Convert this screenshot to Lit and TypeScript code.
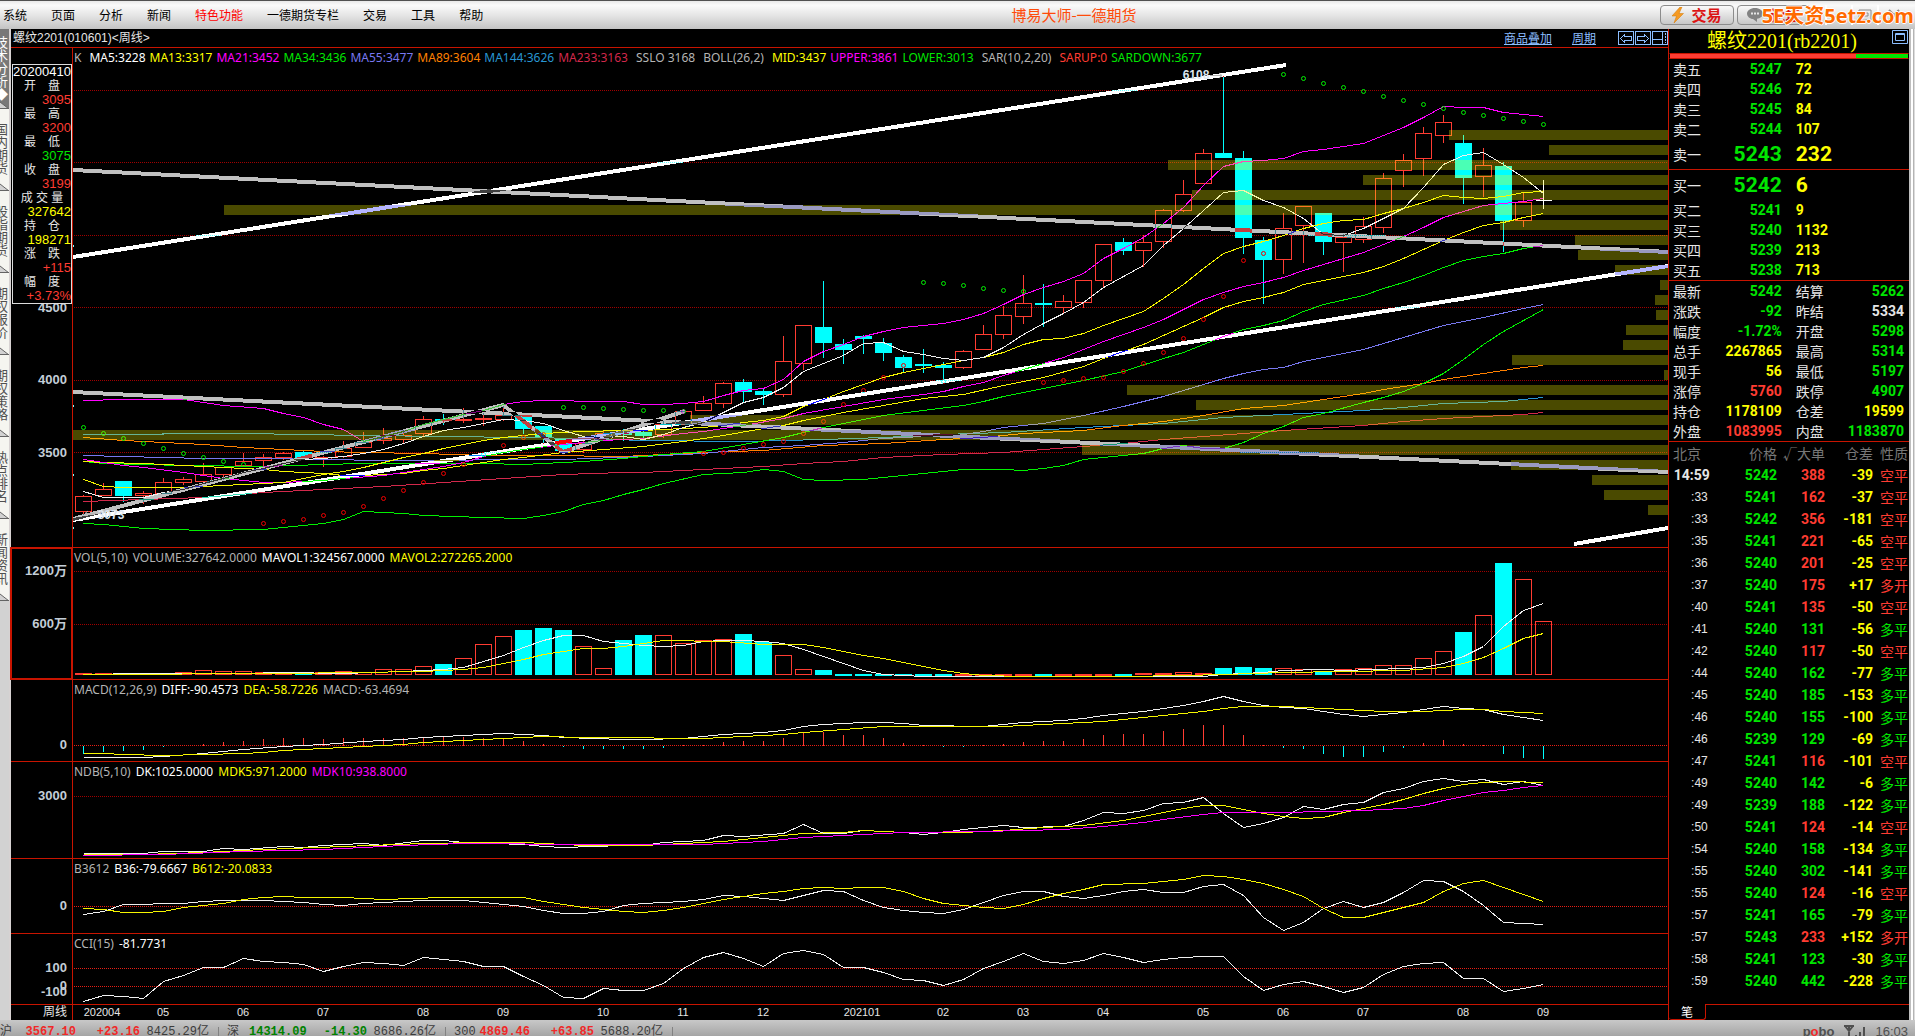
import { LitElement, html, svg, css, nothing } from "lit";
import { customElement, property } from "lit/decorators.js";
import { classMap } from "lit/directives/class-map.js";

/* ---------- chart data ---------- */

const LEFT = 73;
const WIDTH = 1595;
const STEP = 20;
const FIRST = 83;
const slotX = (i: number) => FIRST + STEP * i;

interface Series { tone: string; points: string; }
interface Mark { text: string; y: number; }
interface Legend { text: string; tone: string; }
interface Panel {
  id: string;
  top: number;
  height: number;
  legend: Legend[];
  marks: Mark[];
  grid: number[];
  bright?: boolean;
  framed?: boolean;
  series: Series[];
}

// kind, body top, body bottom, high, low
type Candle = [string, number, number, number, number];
const CANDLES: Candle[] = [
  ["r", 496, 511, 495, 515], ["r", 489, 495, 483, 495], ["c", 481, 496, 481, 502], ["r", 493, 495, 491, 504],
  ["r", 482, 493, 478, 493], ["r", 479, 482, 477, 485], ["r", 474, 481, 463, 482], ["r", 467, 474, 467, 480],
  ["r", 461, 465, 453, 467], ["r", 457, 460, 454, 466], ["r", 453, 457, 452, 460], ["c", 452, 458, 451, 458],
  ["r", 457, 459, 456, 467], ["r", 448, 456, 441, 458], ["r", 442, 447, 432, 448], ["r", 438, 440, 428, 444],
  ["r", 435, 439, 430, 443], ["r", 419, 433, 416, 436], ["c", 419, 421, 414, 425], ["r", 419, 420, 408, 423],
  ["r", 418, 419, 413, 426], ["r", 415, 419, 406, 421], ["c", 415, 429, 415, 434], ["c", 426, 438, 426, 444],
  ["c", 438, 451, 438, 451], ["r", 443, 449, 441, 453], ["r", 433, 439, 430, 439], ["c", 433, 435, 429, 441],
  ["c", 432, 436, 430, 439], ["r", 424, 434, 421, 438], ["r", 411, 424, 411, 424], ["r", 403, 410, 396, 410],
  ["r", 383, 403, 382, 408], ["c", 382, 392, 379, 402], ["c", 391, 395, 388, 405], ["r", 361, 394, 336, 397],
  ["r", 325, 363, 325, 370], ["c", 327, 343, 281, 358], ["c", 344, 350, 339, 364], ["c", 336, 339, 335, 354],
  ["c", 343, 353, 338, 361], ["c", 357, 368, 355, 372], ["c", 364, 366, 349, 373], ["c", 365, 368, 362, 380],
  ["r", 351, 367, 350, 369], ["r", 334, 349, 325, 349], ["r", 315, 334, 306, 339], ["r", 303, 316, 275, 324],
  ["c", 303, 305, 284, 327], ["r", 301, 307, 295, 314], ["r", 280, 302, 280, 308], ["r", 244, 280, 244, 287],
  ["c", 242, 251, 238, 255], ["r", 242, 250, 235, 267], ["r", 210, 241, 209, 248], ["r", 194, 210, 180, 212],
  ["r", 153, 183, 149, 183], ["c", 153, 158, 76, 158], ["c", 158, 238, 151, 254], ["c", 240, 260, 237, 304],
  ["r", 228, 259, 213, 274], ["r", 206, 225, 206, 263], ["c", 213, 242, 213, 255], ["r", 237, 242, 234, 272],
  ["r", 226, 239, 217, 243], ["r", 178, 227, 173, 233], ["r", 160, 170, 154, 187], ["r", 133, 158, 127, 176],
  ["r", 122, 135, 115, 143], ["c", 143, 178, 135, 204], ["r", 165, 176, 148, 197], ["c", 166, 221, 162, 252],
  ["r", 202, 220, 193, 227], ["x", 200, 200, 180, 209],
];

const VOLUME = [
  674, 674, 674, 674, 674, 673, 671, 672, 672, 673, 673, 673, 673, 672, 673, 670, 670, 667, 665, 659, 645, 637, 631, 629,
  631, 647, 669, 641, 636, 636, 644, 641, 640, 635, 643, 656, 670, 671, 675, 675, 675, 675, 675, 675, 675, 675, 675, 675,
  675, 675, 675, 675, 675, 674, 674, 673, 674, 669, 668, 669, 669, 670, 672, 670, 669, 666, 666, 659, 652, 633, 616, 564,
  580, 622,
];

const MACD_BARS = [
  753, 751, 750, 749, 746, 745, 743, 741, 740, 738, 737, 737, 738, 737, 737, 737, 737, 736, 736, 736, 737, 738, 740, 743,
  746, 748, 748, 748, 748, 747, 744, 744, 741, 740, 740, 737, 732, 731, 734, 734, 737, 742, 744, 746, 746, 744, 743, 741,
  740, 740, 738, 734, 733, 733, 730, 728, 724, 724, 734, 744, 747, 748, 753, 756, 756, 751, 747, 742, 739, 743, 744, 753,
  757, 758,
];

// top edge, left edge of each traded-volume band
const BANDS: [number, number][] = [
  [130, 1449], [145, 1549], [160, 1168], [175, 1363], [190, 1192], [205, 224], [220, 1500], [235, 1575], [250, 1578],
  [265, 1615], [280, 1660], [295, 1655], [310, 1656], [325, 1626], [340, 1623], [355, 1512], [370, 1664], [385, 1127],
  [400, 1196], [415, 690], [430, 73], [445, 1082], [460, 1511], [475, 1592], [490, 1604], [505, 1648],
];

const SAR_DOWN = "0,427 1,433 2,438 3,443 4,448 5,453 6,457 7,461 8,464 24,407 25,407 26,408 27,409 28,410 29,410 30,411 42,282 43,283 44,285 45,288 46,290 47,291 60,74 61,78 62,83 63,87 64,91 65,96 66,100 67,104 68,108 69,112 70,115 71,118 72,121 73,124";
const SAR_UP = "9,523 10,521 11,519 12,515 13,512 14,506 15,498 16,490 17,482 18,473 19,464 20,454 21,445 22,437 23,434 31,453 32,452 33,448 34,444 35,441 36,433 37,421 38,404 39,390 40,377 41,365 43,381 48,382 49,380 50,378 51,377 52,371 53,363 54,352 55,338 56,319 57,296 58,260 59,253";

const PANELS: Panel[] = [
  {
    id: "price", top: 48, height: 499,
    legend: [
      { text: "K", tone: "grey wide" }, { text: "MA5:3228", tone: "white" }, { text: "MA13:3317", tone: "yellow" },
      { text: "MA21:3452", tone: "magenta" }, { text: "MA34:3436", tone: "green" }, { text: "MA55:3477", tone: "indigo" },
      { text: "MA89:3604", tone: "orange" }, { text: "MA144:3626", tone: "blue" }, { text: "MA233:3163", tone: "crimson wide" },
      { text: "SSLO 3168", tone: "grey wide" }, { text: "BOLL(26,2)", tone: "grey wide" }, { text: "MID:3437", tone: "yellow" },
      { text: "UPPER:3861", tone: "magenta" }, { text: "LOWER:3013", tone: "green wide" }, { text: "SAR(10,2,20)", tone: "grey wide" },
      { text: "SARUP:0", tone: "red" }, { text: "SARDOWN:3677", tone: "green" },
    ],
    marks: [{ text: "4500", y: 308 }, { text: "4000", y: 380 }, { text: "3500", y: 453 }],
    grid: [90, 162, 235, 307, 380, 452],
    series: [
      { tone: "crimson", points: "0,501 3,499 6,497 9,492 12,489 15,486 18,482 21,478 24,474 27,472 28,472 31,469 34,466 36,463 38,461 40,457 43,454 46,452 48,449 50,446 52,443 54,439 56,436 58,433 60,430 64,425 66,421 68,418 70,416 72,414 73,412" },
      { tone: "blue", points: "0,434 8,433 14,435 18,436 22,437 25,438 28,440 33,441 37,439 40,437 43,434 46,432 50,427 54,423 57,417 60,414 64,410 66,407 68,403 71,401 73,397" },
      { tone: "orange", points: "0,437 2,440 4,442 6,444 8,447 10,449 12,451 14,452 17,453 20,455 23,455 27,456 28,455 31,452 34,450 37,445 40,443 43,439 45,437 47,433 50,430 52,425 54,421 56,415 58,408 60,405 62,399 64,393 65,389 67,383 68,379 70,373 71,370 72,367 73,365" },
      { tone: "indigo", points: "0,455 4,457 6,458 9,458 12,459 15,460 24,459 28,456 31,453 32,451 34,447 36,445 38,442 40,438 42,436 44,434 45,431 46,427 48,423 50,415 52,406 54,396 55,390 56,384 57,378 58,373 59,369 60,367 61,361 64,349 65,343 66,337 67,331 68,325 70,317 72,308 73,304" },
      { tone: "green", points: "0,461 1,463 5,465 9,466 12,464 14,463 20,463 22,464 24,462 25,461 27,458 28,456 29,454 31,451 33,444 35,437 36,432 37,427 38,423 40,415 42,410 44,405 45,401 46,396 48,388 50,380 52,371 54,358 55,352 56,344 57,336 58,329 59,325 60,320 61,311 62,304 64,295 65,288 66,282 67,275 68,267 69,260 70,256 71,253 72,248 73,245" },
      { tone: "green", points: "0,523 1,524 3,528 6,530 9,529 11,525 12,523 13,519 14,511 16,513 17,515 20,517 22,518 23,515 24,511 25,504 26,500 27,494 28,489 29,483 31,474 33,472 34,469 35,471 36,479 37,480 39,479 41,475 43,471 44,469 46,469 47,470 48,468 49,465 50,459 51,457 53,453 54,448 55,445 56,448 57,448 58,442 59,433 60,426 61,417 62,413 64,402 65,397 66,391 67,383 68,373 69,359 70,344 71,331 72,320 73,309" },
      { tone: "yellow", points: "0,461 1,462 3,463 5,465 7,467 9,469 10,471 11,472 12,473 13,475 14,475 15,474 16,473 17,470 18,468 19,465 20,462 21,459 22,457 24,452 26,449 28,446 30,441 32,435 34,428 35,425 36,420 38,412 40,405 42,398 44,394 46,385 48,377 50,366 51,358 52,351 53,344 54,335 55,326 56,317 57,307 58,301 59,297 60,292 61,284 63,276 64,272 65,266 66,258 67,249 68,240 69,232 70,225 71,222 72,217 73,213" },
      { tone: "magenta", points: "0,459 2,465 3,467 5,472 6,475 7,478 8,480 9,482 10,482 11,481 12,480 13,478 15,475 16,472 17,469 18,466 19,462 20,456 21,452 22,449 24,444 26,440 28,438 30,433 31,431 33,425 35,418 36,413 38,406 40,399 42,394 43,391 44,386 45,382 46,375 47,369 48,363 49,357 50,349 51,341 52,334 53,327 54,319 55,309 56,299 57,292 58,286 59,282 60,277 61,270 63,258 64,252 65,244 66,236 67,227 68,217 69,211 70,205 71,203 72,201 73,198" },
      { tone: "yellow", points: "0,479 1,486 2,487 5,487 7,485 9,483 10,482 11,478 12,474 13,471 14,467 15,462 16,457 17,453 18,448 19,444 20,440 21,437 22,435 23,433 24,432 25,431 27,430 28,430 30,428 31,427 32,425 33,422 34,420 35,416 36,406 37,399 38,391 39,384 40,377 41,372 42,368 43,364 44,360 45,357 46,352 47,344 48,339 49,338 50,333 51,325 52,318 53,311 54,298 55,284 56,268 57,253 58,246 59,241 60,235 61,228 62,223 63,220 64,219 65,213 66,208 67,202 68,195 69,197 70,198 71,196 72,192 73,191" },
      { tone: "magenta", points: "0,400 2,399 5,399 7,405 9,408 10,413 11,417 12,424 13,429 14,441 15,436 16,431 17,424 18,419 19,414 20,410 21,404 22,401 23,400 24,400 25,401 27,401 28,404 29,404 30,403 31,401 32,395 33,390 34,388 35,379 36,361 37,351 38,344 39,336 40,331 41,327 42,325 43,323 44,319 45,313 46,304 47,294 48,287 49,281 50,273 51,258 52,248 53,237 54,223 55,207 56,185 57,166 58,161 59,160 60,158 61,151 62,149 63,146 64,143 65,135 66,127 67,117 68,106 69,107 70,107 71,112 72,114 73,116" },
      { tone: "white", points: "0,491 1,497 2,497 3,497 4,492 5,489 6,483 7,478 8,472 9,468 10,463 11,459 12,458 13,456 14,453 15,449 16,443 17,436 18,430 19,427 20,423 21,419 22,420 23,423 24,430 25,436 26,437 27,436 28,439 29,434 30,427 31,422 32,412 33,402 34,397 35,387 36,371 37,363 38,355 39,343 40,342 41,351 42,354 43,358 44,360 45,357 46,347 47,334 48,323 49,313 50,302 51,287 52,276 53,265 54,245 55,228 56,210 57,192 58,190 59,200 60,207 61,218 62,234 63,235 64,228 65,218 66,208 67,187 68,164 69,155 70,152 71,164 72,177 73,193" },
    ],
  },
  {
    id: "volume", top: 548, height: 131, framed: true,
    legend: [
      { text: "VOL(5,10)", tone: "grey" }, { text: "VOLUME:327642.0000", tone: "grey" },
      { text: "MAVOL1:324567.0000", tone: "white" }, { text: "MAVOL2:272265.2000", tone: "yellow" },
    ],
    marks: [{ text: "1200万", y: 571 }, { text: "600万", y: 624 }],
    grid: [571, 624],
    series: [
      { tone: "white", points: "0,674 3,673 8,673 10,672 13,673 16,671 17,670 18,669 19,667 20,661 21,655 22,647 23,640 24,635 25,635 26,641 27,643 28,645 29,646 30,645 31,641 32,640 33,640 34,641 35,643 36,649 37,656 38,663 39,670 40,674 41,675 42,676 56,676 57,674 59,672 60,670 62,669 63,670 66,668 67,667 68,663 69,656 70,646 71,626 72,610 73,603" },
      { tone: "yellow", points: "0,674 10,673 17,671 19,669 20,667 21,663 22,659 23,654 24,651 25,648 26,648 27,646 28,643 29,640 32,641 34,644 36,644 37,647 39,655 40,658 42,666 43,670 44,673 45,675 47,676 52,676 55,675 57,674 60,672 63,671 66,670 68,667 69,663 70,657 71,648 72,638 73,633" },
    ],
  },
  {
    id: "macd", top: 680, height: 81, bright: true,
    legend: [
      { text: "MACD(12,26,9)", tone: "grey" }, { text: "DIFF:-90.4573", tone: "white" },
      { text: "DEA:-58.7226", tone: "yellow" }, { text: "MACD:-63.4694", tone: "grey" },
    ],
    marks: [{ text: "0", y: 745 }],
    grid: [745],
    series: [
      { tone: "white", points: "0,757 3,757 4,756 6,753 7,751 8,749 10,746 12,744 14,741 16,739 17,737 19,735 21,733 23,735 24,737 27,739 28,739 30,738 31,736 32,734 34,732 35,730 36,726 37,724 39,722 40,722 41,723 42,725 45,726 47,722 49,720 50,718 51,715 53,711 54,708 55,705 56,701 57,696 58,701 59,705 60,707 61,708 62,711 63,714 64,716 66,712 67,709 68,706 69,708 70,709 71,714 72,717 73,720" },
      { tone: "yellow", points: "0,753 1,753 2,754 4,755 6,754 8,753 9,752 10,750 12,748 14,746 16,744 17,742 19,740 21,738 23,736 25,737 27,737 30,738 31,738 33,736 35,734 36,732 38,729 40,726 46,726 48,724 51,721 53,717 55,713 56,711 57,708 58,706 60,706 62,708 65,711 67,711 69,709 70,709 71,711 72,712 73,713" },
    ],
  },
  {
    id: "ndb", top: 762, height: 96,
    legend: [
      { text: "NDB(5,10)", tone: "grey" }, { text: "DK:1025.0000", tone: "white" },
      { text: "MDK5:971.2000", tone: "yellow" }, { text: "MDK10:938.8000", tone: "magenta" },
    ],
    marks: [{ text: "3000", y: 796 }],
    grid: [796],
    series: [
      { tone: "white", points: "0,853 3,853 4,851 6,851 7,848 8,849 10,846 11,847 12,845 14,843 15,845 17,840 18,840 19,842 22,844 23,846 24,847 27,845 28,845 29,842 31,840 32,835 33,836 35,833 36,824 37,833 38,833 39,830 41,832 42,834 43,832 44,829 46,825 47,827 49,826 50,820 51,812 52,813 53,810 54,803 55,802 56,797 57,813 58,827 59,823 60,817 61,806 62,809 63,804 64,802 65,792 66,788 67,781 68,778 69,781 70,779 71,784 72,781 73,785" },
      { tone: "yellow", points: "0,854 3,854 6,852 9,849 13,846 17,843 20,842 22,842 25,845 28,845 30,843 32,841 34,837 36,833 38,832 39,830 41,832 44,832 46,830 48,827 50,825 52,820 53,816 54,812 55,808 56,805 57,805 58,809 59,813 60,816 61,818 62,817 63,812 64,808 65,804 66,799 67,793 68,788 69,784 70,782 71,781 73,782" },
      { tone: "magenta", points: "0,855 4,854 8,851 12,849 16,845 19,843 25,844 31,844 34,841 36,837 39,834 41,832 45,831 49,829 51,826 53,822 54,819 56,814 57,812 60,812 64,810 66,808 67,805 68,800 69,796 70,792 71,790 72,787 73,785" },
    ],
  },
  {
    id: "b3612", top: 859, height: 74, bright: true,
    legend: [
      { text: "B3612", tone: "grey" }, { text: "B36:-79.6667", tone: "white" }, { text: "B612:-20.0833", tone: "yellow" },
    ],
    marks: [{ text: "0", y: 906 }],
    grid: [906],
    series: [
      { tone: "white", points: "0,914 1,911 2,904 5,903 6,901 7,900 9,900 11,902 12,904 13,905 14,903 17,900 19,900 20,902 22,906 23,910 24,913 25,913 26,911 27,905 28,903 30,901 31,899 32,895 33,896 35,900 36,895 37,890 38,891 39,900 40,907 41,910 42,912 43,913 44,909 45,902 46,895 47,891 48,891 49,896 50,898 51,895 52,891 53,889 54,892 55,892 56,886 57,884 58,895 59,917 60,930 61,922 62,908 63,901 64,907 65,902 66,892 67,880 68,881 69,891 70,905 71,922 72,923 73,924" },
      { tone: "yellow", points: "0,908 1,909 2,912 3,912 4,911 5,907 6,905 7,903 8,899 9,897 10,896 11,897 13,897 15,899 18,897 22,897 23,901 24,904 25,907 27,911 28,912 29,910 30,907 31,903 32,899 33,896 34,893 35,891 36,888 37,887 38,888 39,887 40,887 41,891 42,898 43,903 44,905 45,907 46,908 47,904 48,898 49,893 50,889 51,884 53,883 54,881 55,879 56,875 57,876 58,879 59,883 60,889 61,896 62,908 63,917 64,917 65,912 67,902 68,891 69,883 70,880 71,887 72,894 73,901" },
    ],
  },
  {
    id: "cci", top: 934, height: 70, bright: true,
    legend: [{ text: "CCI(15)", tone: "grey" }, { text: "-81.7731", tone: "white" }],
    marks: [{ text: "100", y: 968 }, { text: "0", y: 986 }, { text: "-100", y: 992 }],
    grid: [968, 986],
    series: [
      { tone: "white", points: "0,1001 1,995 2,996 3,998 4,981 5,975 6,967 7,967 8,958 9,961 10,962 11,964 12,971 13,966 14,962 15,963 16,965 17,957 18,959 19,961 20,966 21,966 22,976 23,985 24,997 25,998 26,988 27,990 28,990 29,983 30,968 31,957 32,952 33,958 34,966 35,953 36,950 37,954 38,967 39,967 40,972 41,979 42,980 43,985 44,979 45,968 46,961 47,953 48,961 49,963 50,960 51,953 52,957 53,962 54,959 55,957 56,956 57,956 58,976 59,990 60,984 61,981 62,986 63,992 64,987 65,974 66,966 67,963 68,962 69,978 70,978 71,991 72,988 73,984" },
    ],
  },
];

const MONTHS: [string, number][] = [
  ["202004", 102], ["05", 163], ["06", 243], ["07", 323], ["08", 423], ["09", 503], ["10", 603], ["11", 683], ["12", 763],
  ["202101", 862], ["02", 943], ["03", 1023], ["04", 1103], ["05", 1203], ["06", 1283], ["07", 1363], ["08", 1463], ["09", 1543],
];

const READOUT: [string, string, string][] = [
  ["开　盘", "3095", "red"], ["最　高", "3200", "red"], ["最　低", "3075", "green"], ["收　盘", "3199", "red"],
  ["成 交 量", "327642", "yellow"], ["持　仓", "198271", "yellow"], ["涨　跌", "+115", "red"], ["幅　度", "+3.73%", "red"],
];

const toXY = (points: string) =>
  points.split(" ").map((p) => {
    const [i, y] = p.split(",").map(Number);
    return [slotX(i) + 0.5, y + 0.5];
  });

/* ---------- shared colours ---------- */

const tones = css`
  .white { color: #fff; stroke: #f0f0f0; }
  .grey { color: #b4b4b4; stroke: #b4b4b4; }
  .yellow { color: #ff0; stroke: #f5f500; }
  .magenta { color: #f0f; stroke: #f0f; }
  .green { color: #00e600; stroke: #00f000; }
  .indigo { color: #7878f0; stroke: #7878f0; }
  .orange { color: #ff8000; stroke: #ff8000; }
  .blue { color: #2896d2; stroke: #2896d2; }
  .crimson { color: #d2284b; stroke: #d2284b; }
  .red { color: #ff3c32; stroke: #ff3c32; }
`;

/* ---------- chart ---------- */

@customElement("indicator-panel")
export class IndicatorPanel extends LitElement {
  @property({ attribute: false }) panel!: Panel;

  static styles = [tones, css`
    :host { display: grid; grid-template-columns: 61px minmax(0, 1fr); min-height: 0; border-bottom: 1px solid #c81400; box-sizing: border-box; }
    .axis { position: relative; font: bold 13px/14px "Liberation Sans", "Noto Sans CJK SC", sans-serif; color: #c3cdd7; }
    .axis.framed { outline: 2px solid #c81400; outline-offset: -1px; }
    .mark { position: absolute; right: 5px; transform: translateY(-50%); }
    .plot { position: relative; border-left: 1px solid #c81400; min-width: 0; }
    svg { position: absolute; inset: 0; width: 100%; height: 100%; isolation: isolate; }
    .legend { position: relative; display: flex; gap: 5px; padding-left: 1px; font: 12px/19px "Noto Sans", "Noto Sans CJK SC", sans-serif; white-space: nowrap; overflow: hidden; }
    .legend.dense { gap: 4px; line-height: 20px; }
    .wide { margin-right: 4px; }
    .grid { stroke: #a00000; stroke-dasharray: 1 1; shape-rendering: crispEdges; }
    .grid.bright { stroke: #e61e14; }
    .curve { fill: none; shape-rendering: crispEdges; }
    .r { fill: none; stroke: #ff3c32; shape-rendering: crispEdges; }
    .c { fill: #0ff; stroke: #0ff; shape-rendering: crispEdges; }
    .x { stroke: #fff; fill: none; shape-rendering: crispEdges; }
    .arrow { fill: none; }
    .ring { fill: none; }
    .ring.up { stroke: #f00000; }
    .ring.down { stroke: #00f000; }
    .band { fill: #ff0; opacity: 0.29; shape-rendering: crispEdges; }
    .trend { fill: none; stroke: #fff; stroke-width: 4; mix-blend-mode: difference; shape-rendering: crispEdges; }
    .trend.soft { stroke: #c0c0c0; }
    .tick { fill: #7ff; }
    .pin { position: absolute; transform: translate(-50%, -50%); font: bold 12px/14px "Liberation Sans", sans-serif; color: #dce6f0; }
  `];

  private candles() {
    return CANDLES.map(([kind, top, bottom, high, low], i) => {
      const x = slotX(i) + 0.5;
      if (kind === "x") {
        return svg`<path class="x" d="M${x} ${high}V${low}M${x - 8} ${top + 0.5}H${x + 8}"/>`;
      }
      if (kind === "c") {
        return svg`<g class="c"><path d="M${x} ${high}V${low}"/><rect x=${x - 8} y=${top + 0.5} width="16" height=${Math.max(1, bottom - top - 1)}/></g>`;
      }
      return svg`<g class="r"><path d="M${x} ${high}V${top}M${x} ${bottom}V${low}"/><rect x=${x - 8} y=${top + 0.5} width="16" height=${Math.max(1, bottom - top)}/></g>`;
    });
  }

  private rings(points: string, kind: string) {
    return toXY(points).map(([x, y]) => svg`<ellipse class="ring ${kind}" cx=${x} cy=${y} rx="2" ry="2"/>`);
  }

  private trends() {
    return svg`
      <path class="trend soft" d="M73 170L1668 252"/>
      <path class="trend soft" d="M73 392L1668 472"/>
      <path class="trend soft" d="M73 519L503 405L563 452L685 411"/>
      <path class="trend" d="M73 257L1286 65"/>
      <path class="trend" d="M73 520L1668 266"/>
      <path class="trend" d="M1574 544L1668 528"/>
      ${[245, 405, 474, 527].map((y) => svg`<rect class="tick" x="73" y=${y} width="1" height="2"/>`)}
      <path class="grey arrow" d="M1210 75.5H1222M1219 73L1222 75.5L1219 78"/>
      <path class="grey arrow" d="M85 513.5H96M88 511L85 513.5L88 516"/>`;
  }

  private bars() {
    return VOLUME.map((top, i) => {
      const kind = CANDLES[i][0] === "c" ? "c" : "r";
      return svg`<rect class=${kind} x=${slotX(i) - 7.5} y=${top - 0.5} width="16" height=${Math.max(1, 675 - top)}/>`;
    });
  }

  private histogram() {
    return MACD_BARS.map((y, i) => svg`<path class=${y > 745 ? "c" : "r"} d="M${slotX(i) + 0.5} 745.5V${y + 0.5}"/>`);
  }

  render() {
    const { id, top, height, legend, marks, grid, bright, framed, series } = this.panel;
    const percent = (y: number) => ((y - top) / height) * 100;
    return html`
      <div class=${classMap({ axis: true, framed: !!framed })}>
        ${marks.map((m) => html`<span class="mark" style="top:${percent(m.y)}%">${m.text}</span>`)}
      </div>
      <div class="plot">
        <svg viewBox="${LEFT} ${top} ${WIDTH} ${height}" preserveAspectRatio="none" aria-hidden="true">
          ${grid.map((y) => svg`<path class="grid ${bright ? "bright" : ""}" d="M74 ${y + 0.5}H1668"/>`)}
          ${id === "price" ? this.candles() : nothing}
          ${id === "volume" ? this.bars() : nothing}
          ${id === "macd" ? this.histogram() : nothing}
          ${series.map((s) => svg`<polyline class="curve ${s.tone}" points=${toXY(s.points).map((p) => p.join(",")).join(" ")}/>`)}
          ${id === "price"
            ? svg`${this.rings(SAR_UP, "up")}${this.rings(SAR_DOWN, "down")}
                ${BANDS.map(([y, x]) => svg`<rect class="band" x=${x} y=${y} width=${LEFT + WIDTH - x} height="10"/>`)}
                ${this.trends()}`
            : nothing}
        </svg>
        <div class=${classMap({ legend: true, dense: id === "price" })}>${legend.map((l) => html`<span class=${l.tone}>${l.text}</span>`)}</div>
        ${id === "price"
          ? [["6108", 1196, 75], ["3073", 111, 515]].map(([text, x, y]) => html`
              <span class="pin" style="left:${((+x - LEFT) / WIDTH) * 100}%;top:${percent(+y)}%">${text}</span>`)
          : nothing}
      </div>`;
  }
}

@customElement("chart-area")
export class ChartArea extends LitElement {
  static styles = [tones, css`
    :host { position: relative; display: grid; min-height: 0; min-width: 0; background: #000; border-right: 1px solid #c81400;
      grid-template-rows: 19px minmax(0, 500fr) minmax(0, 132fr) minmax(0, 82fr) minmax(0, 97fr) minmax(0, 75fr) minmax(0, 71fr) 15px; }
    .head { display: flex; align-items: center; box-sizing: border-box; border-bottom: 1px solid #c81400; padding-left: 2px; }
    .name { flex: 1; font: 12px/16px "Liberation Sans", "Noto Sans CJK SC", sans-serif; color: #e6e6e6; }
    .links { display: flex; gap: 20px; margin-right: 22px; font: 12px/16px "Noto Sans CJK SC", sans-serif; }
    .links a { color: #8cbeff; text-decoration: underline; }
    .tools { display: flex; gap: 1px; }
    .tools button { width: 16px; height: 15px; padding: 0; border: 0; background: none; display: block; }
    .tools svg { display: block; width: 16px; height: 15px; fill: none; stroke: #8cbeff; shape-rendering: crispEdges; }
    .dates { display: grid; grid-template-columns: 61px minmax(0, 1fr); font: 12px/15px "Liberation Sans", "Noto Sans CJK SC", sans-serif; color: #e6e6e6; }
    .period { text-align: right; padding-right: 5px; }
    .scale { position: relative; border-left: 1px solid #c81400; font: 11px/15px "Liberation Sans", sans-serif; }
    .month { position: absolute; transform: translateX(-50%); }
    .readout { position: absolute; left: 1px; top: 35px; width: 60px; box-sizing: border-box; margin: 0; border: 1px solid #dcdcdc; background: #000;
      font: 13px/14px "Liberation Sans", "Noto Sans CJK SC", sans-serif; color: #fff; }
    .day { text-align: center; line-height: 14px; }
    .readout dl { margin: 0; }
    .readout dt { text-align: center; font-size: 12px; color: #e6e6e6; }
    .readout dd { margin: 0; text-align: right; }
  `];

  render() {
    return html`
      <div class="head">
        <span class="name">螺纹2201(010601)&lt;周线&gt;</span>
        <nav class="links"><a href="#overlay">商品叠加</a><a href="#period">周期</a></nav>
        <div class="tools">
          <button aria-label="左移"><svg viewBox="0 0 16 15"><path d="M.5.5h15v13H.5zM2.5 7.5l4-4v2h7v4h-7v2z"/></svg></button>
          <button aria-label="右移"><svg viewBox="0 0 16 15"><path d="M.5.5h15v13H.5zM13.5 7.5l-4-4v2h-7v4h7v2z"/></svg></button>
          <button aria-label="布局"><svg viewBox="0 0 16 15"><path d="M.5.5h15v13H.5zM.5 8.5h10M10.5.5v13"/><path d="M13.5 2v10" stroke-dasharray="2 1"/></svg></button>
        </div>
      </div>
      ${PANELS.map((p) => html`<indicator-panel .panel=${p}></indicator-panel>`)}
      <div class="dates">
        <span class="period">周线</span>
        <div class="scale">${MONTHS.map(([m, x]) => html`<span class="month" style="left:${((x - LEFT) / WIDTH) * 100}%">${m}</span>`)}</div>
      </div>
      <div class="readout">
        <div class="day">20200410</div>
        <dl>${READOUT.map(([k, v, tone]) => html`<dt>${k}</dt><dd class=${tone}>${v}</dd>`)}</dl>
      </div>`;
  }
}

/* ---------- quote panel ---------- */

const ASKS = [["卖五", "5247", "72"], ["卖四", "5246", "72"], ["卖三", "5245", "84"], ["卖二", "5244", "107"], ["卖一", "5243", "232"]];
const BIDS = [["买一", "5242", "6"], ["买二", "5241", "9"], ["买三", "5240", "1132"], ["买四", "5239", "213"], ["买五", "5238", "713"]];
const STATS = [
  ["最新", "5242", "green", "结算", "5262", "green"], ["涨跌", "-92", "green", "昨结", "5334", "pale"],
  ["幅度", "-1.72%", "green", "开盘", "5298", "green"], ["总手", "2267865", "yellow", "最高", "5314", "green"],
  ["现手", "56", "yellow", "最低", "5197", "green"], ["涨停", "5760", "red", "跌停", "4907", "green"],
  ["持仓", "1178109", "yellow", "仓差", "19599", "yellow"], ["外盘", "1083995", "red", "内盘", "1183870", "green"],
];
const TICKS = [
  "14:59 5242 388 -39 空平", ":33 5241 162 -37 空平", ":33 5242 356 -181 空平", ":35 5241 221 -65 空平",
  ":36 5240 201 -25 空平", ":37 5240 175 +17 多开", ":40 5241 135 -50 空平", ":41 5240 131 -56 多平",
  ":42 5240 117 -50 空平", ":44 5240 162 -77 多平", ":45 5240 185 -153 多平", ":46 5240 155 -100 多平",
  ":46 5239 129 -69 多平", ":47 5241 116 -101 空平", ":49 5240 142 -6 多平", ":49 5239 188 -122 多平",
  ":50 5241 124 -14 空平", ":54 5240 158 -134 多平", ":55 5240 302 -141 多平", ":55 5240 124 -16 空平",
  ":57 5241 165 -79 多平", ":57 5243 233 +152 多开", ":58 5241 123 -30 多平", ":59 5240 442 -228 多平",
].map((t) => t.split(" "));

@customElement("quote-panel")
export class QuotePanel extends LitElement {
  static styles = [tones, css`
    :host { display: flex; flex-direction: column; min-height: 0; overflow: hidden; background: #000; color: #e6e6e6; font: 14px/20px "Noto Sans CJK SC", sans-serif; }
    .title { position: relative; height: 24px; }
    h1 { margin: 0; font: 20px/24px "Liberation Serif", "Noto Sans CJK SC", serif; color: #ff0; text-align: center; padding-right: 14px; }
    .title button { position: absolute; right: 1px; top: 1px; width: 16px; height: 14px; padding: 0; border: 0; background: none; }
    .title svg { display: block; fill: none; stroke: #8cbeff; }
    .ratio { height: 6px; box-sizing: border-box; display: flex; border: 1px solid #c81400; border-left-color: #000; border-right-color: #000; }
    .ratio i { background: #ff3c32; flex: 186; }
    .ratio b { background: #00e600; flex: 52; }
    table { width: 100%; table-layout: fixed; border-collapse: collapse; }
    .w15 { width: 15%; }
    .w17 { width: 17%; }
    .w20 { width: 20%; }
    .w28 { width: 28%; }
    .w32 { width: 32%; }
    td, th { padding: 0; font-weight: normal; text-align: left; height: 20px; line-height: 20px; white-space: nowrap; }
    th:first-child, td:first-child { padding-left: 4px; }
    .book, .stats { border-bottom: 1px solid #c81400; }
    .num { font: bold 14px/20px "Roboto", sans-serif; text-align: right; }
    .book .qty { text-align: left; padding-left: 14px; }
    .best td, .best th { height: 30px; line-height: 30px; }
    .best .num { font-size: 21px; line-height: 30px; }
    .label2 { padding-left: 14px; }
    .stats .num:last-child { padding-right: 5px; }
    .pale { color: #e6e6e6; }
    .ticks td, .ticks th { height: 22px; line-height: 22px; text-align: right; }
    .ticks th { color: #787878; }
    .ticks thead th:first-child { text-align: left; }
    .ticks .clock { font: 12px/22px "Liberation Sans", sans-serif; padding-right: 2px; color: #e6e6e6; }
    .ticks .clock.full { font: bold 14px/22px "Roboto", sans-serif; padding-right: 0; }
    .ticks td:last-child, .ticks th:last-child { padding-right: 1px; }
    .foot { margin-top: auto; height: 16px; display: flex; }
    .foot button { width: 37px; height: 16px; box-sizing: border-box; padding: 0; border: 1px solid #c81400; border-top: 0; border-left: 0; border-radius: 0 0 3px 3px; background: #000; color: #fff; font: 12px/14px "Noto Sans CJK SC", sans-serif; }
    .foot i { flex: 1; border-top: 1px solid #c81400; }
  `];

  private book(rows: string[][], best: number) {
    return html`<table class="book">
      <colgroup><col class="w15"><col class="w32"><col></colgroup>
      <tbody>${rows.map(([k, p, q], i) => html`<tr class=${i === best ? "best" : ""}>
        <th scope="row">${k}</th><td class="num green">${p}</td><td class="num qty yellow">${q}</td></tr>`)}</tbody>
    </table>`;
  }

  render() {
    return html`
      <div class="title"><h1>螺纹2201(rb2201)</h1>
        <button aria-label="还原"><svg width="16" height="14" viewBox="0 0 16 14"><path d="M.5.5h15v13H.5zM3.5 3.5h9v7h-9zM3.5 4.5h9"/></svg></button></div>
      <div class="ratio"><i></i><b></b></div>
      ${this.book(ASKS, 4)}${this.book(BIDS, 0)}
      <table class="stats">
        <colgroup><col class="w15"><col class="w32"><col class="w20"><col></colgroup>
        <tbody>${STATS.map(([k, v, t, k2, v2, t2]) => html`<tr><th scope="row">${k}</th><td class="num ${t}">${v}</td><th scope="row" class="label2">${k2}</th><td class="num ${t2}">${v2}</td></tr>`)}</tbody>
      </table>
      <table class="ticks">
        <colgroup><col class="w17"><col class="w28"><col class="w20"><col class="w20"><col></colgroup>
        <thead><tr><th>北京</th><th>价格</th><th>√大单</th><th>仓差</th><th>性质</th></tr></thead>
        <tbody>${TICKS.map(([time, price, vol, diff, kind]) => {
          const tone = kind === "多平" ? "green" : "red";
          const volTone = kind === "多平" ? "green" : "red";
          return html`<tr><td class="clock ${time.length > 3 ? "full" : ""}">${time}</td><td class="num green">${price}</td><td class="num ${volTone}">${vol}</td><td class="num yellow">${diff}</td><td class=${tone}>${kind}</td></tr>`;
        })}</tbody>
      </table>
      <div class="foot"><button>笔</button><i></i></div>`;
  }
}

/* ---------- application frame ---------- */

const MENU = ["系统", "页面", "分析", "新闻", "特色功能", "一德期货专栏", "交易", "工具", "帮助"];
const SIDE = ["技术分析", "国内期货", "股指期货", "期权报价", "期权策略", "热点排名", "新闻资讯"];
const INDEXES = [
  ["沪", "3567.10", "+23.16", "8425.29亿", "up"], ["深", "14314.09", "-14.30", "8686.26亿", "down"],
  ["300", "4869.46", "+63.85", "5688.20亿", "up"],
];

@customElement("app-root")
export class AppRoot extends LitElement {
  static styles = css`
    :host { display: grid; grid-template-rows: 29px minmax(0, 1fr) 16px; height: 100vh; overflow: hidden; background: #c8c8c8; font-family: "Noto Sans CJK SC", sans-serif; }
    .bar { position: relative; display: grid; grid-template-columns: 1fr auto 1fr; align-items: center; box-sizing: border-box; border-top: 1px solid #505050; background: linear-gradient(#e8e8e8, #fafafa 15%, #e6e6e6 50%, #c3c3c3); }
    .menu { display: flex; gap: 24px; padding-left: 3px; }
    .menu a { font-size: 12px; line-height: 28px; color: #000; text-decoration: none; white-space: nowrap; }
    .menu a.hot { color: #f00; }
    .caption { font-size: 15px; line-height: 26px; color: #ff4b0a; padding-left: 233px; }
    .right { display: flex; justify-content: flex-end; align-items: center; padding-right: 6px; }
    .pill { display: flex; align-items: center; justify-content: center; gap: 7px; width: 74px; height: 20px; box-sizing: border-box; padding: 0; margin-right: 3px; border: 1px solid #8c8c8c; border-radius: 4px; background: linear-gradient(#fafafa, #c8c8c8); color: #dc1414; font: bold 15px/18px "Noto Sans CJK SC", sans-serif; }
    .win { width: 26px; height: 20px; padding: 0; border: 0; border-left: 2px solid #fff; background: none; display: grid; place-items: center; }
    .win.first { margin-left: 11px; }
    .win.last { width: 32px; }
    .win svg { stroke: #8c8c8c; fill: none; stroke-width: 2; }
    .watermark { position: absolute; right: 1px; top: 0; font: bold 20px/30px "Open Sans", "Noto Sans CJK SC", sans-serif; color: #ff6a00; text-shadow: 1px 0 #fff, -1px 0 #fff, 0 1px #fff, 0 -1px #fff; white-space: nowrap; }
    .body { display: grid; grid-template-columns: 11px minmax(0, 1fr) 240px 6px; min-height: 0; }
    .side { display: flex; flex-direction: column; overflow: hidden; background: #d2d2d2; border-right: 2px solid #d7d2d2; box-sizing: border-box; }
    .side a { display: block; position: relative; flex: none; width: 9px; height: 82px; box-sizing: border-box; padding-top: 13px; background: #f5f5f0; color: #505050; text-decoration: none; font-size: 13px; line-height: 13px; overflow: hidden; }
    .side a.on { height: 80px; padding-top: 6px; background: #787878; color: #fff; }
    .side span { display: block; width: 13px; margin-left: -5px; word-break: break-all; }
    .side svg { position: absolute; left: 0; bottom: 0; }
    .edge { background: linear-gradient(90deg, #bebebe 2px, #fff 2px, #fff 4px, #8c8c8c 4px, #dcdcdc 5px); }
    .status { display: flex; overflow: hidden; align-items: flex-start; background: linear-gradient(#c8c8c8, #a5a5a5); color: #3c3c3c; font: 12px/24px "Liberation Mono", "Noto Sans CJK SC", monospace; white-space: nowrap; }
    .index { display: grid; grid-template-columns: 22px 54px 64px 69px; margin-right: 8px; padding-right: 10px; position: relative; }
    .index::after { content: ""; position: absolute; right: 0; top: 7px; bottom: 0; border-right: 1px solid #828282; }
    .index span { text-align: right; }
    .index span:first-child { text-align: left; }
    .chg { font-weight: bold; }
    .up .chg { color: #f02828; }
    .down .chg { color: #008200; }
    .tray { margin-left: auto; display: flex; gap: 10px; padding-right: 7px; }
    .brand { font: bold 13px/24px "Liberation Sans", sans-serif; color: #505050; }
    .brand em { font-style: normal; color: #f02828; }
    .tray svg { margin-top: 5px; }
    .clock { font: 13px/24px "Liberation Sans", sans-serif; color: #505050; }
  `;

  render() {
    return html`
      <header class="bar">
        <nav class="menu">${MENU.map((m) => html`<a href="#menu" class=${classMap({ hot: m === "特色功能" })}>${m}</a>`)}</nav>
        <span class="caption">博易大师-一德期货</span>
        <div class="right">
          <button class="pill"><svg width="12" height="16" viewBox="0 0 12 16"><path d="M8 0L0 9h4.5L2 16L11.5 6.5H7L10 0z" fill="#f59a23" stroke="#d27800" stroke-width=".5"/></svg>交易</button>
          <button class="pill"><svg width="16" height="14" viewBox="0 0 16 14"><path d="M8 0C3.5 0 0 2.5 0 5.5S3 11 6 11l4 3v-3.200c3.5-.5 6-2.600 6-5.300C16 2.500 12.500 0 8 0z" fill="#828282"/><path d="M4 5.500h2M7 5.500h2M10 5.500h2" stroke="#e6e6e6" stroke-width="2"/></svg>论坛</button>
          <button class="win first" aria-label="最小化"><svg width="14" height="12"><path d="M2 8h10"/></svg></button>
          <button class="win" aria-label="还原"><svg width="14" height="12"><path d="M1 1h12v10H1zM4 4h6v3H4z" stroke-width="1"/></svg></button>
          <button class="win last" aria-label="关闭"><svg width="14" height="12"><path d="M2 1l10 10M12 1L2 11"/></svg></button>
        </div>
        <span class="watermark">5E天资5etz.com</span>
      </header>
      <main class="body">
        <nav class="side">${SIDE.map((s, i) => html`<a href="#page" class=${classMap({ on: i === 0 })}><span>${s}${i === 0 ? "◆" : nothing}</span>
          <svg width="9" height="8" viewBox="0 0 9 8"><path d="M0 1L9 8H0z" fill="#d2d2d2"/><path d="M0 1L9 8M0 7.5H9" stroke="#646464" fill="none"/></svg></a>`)}</nav>
        <chart-area></chart-area>
        <quote-panel></quote-panel>
        <div class="edge"></div>
      </main>
      <footer class="status">
        ${INDEXES.map(([name, price, change, money, dir]) => html`<div class="index ${dir}"><span>${name}</span><span class="chg">${price}</span><span class="chg">${change}</span><span>${money}</span></div>`)}
        <div class="tray">
          <span class="brand">p<em>o</em>bo</span>
          <svg width="21" height="14" viewBox="0 0 21 14" fill="none" stroke="#505050" stroke-width="2"><path d="M0 1h10M1 1l4 5l4-5M5 1v13M12 10v4M16 7v7M20 2v12"/></svg>
          <span class="clock">16:03</span>
        </div>
      </footer>`;
  }
}
